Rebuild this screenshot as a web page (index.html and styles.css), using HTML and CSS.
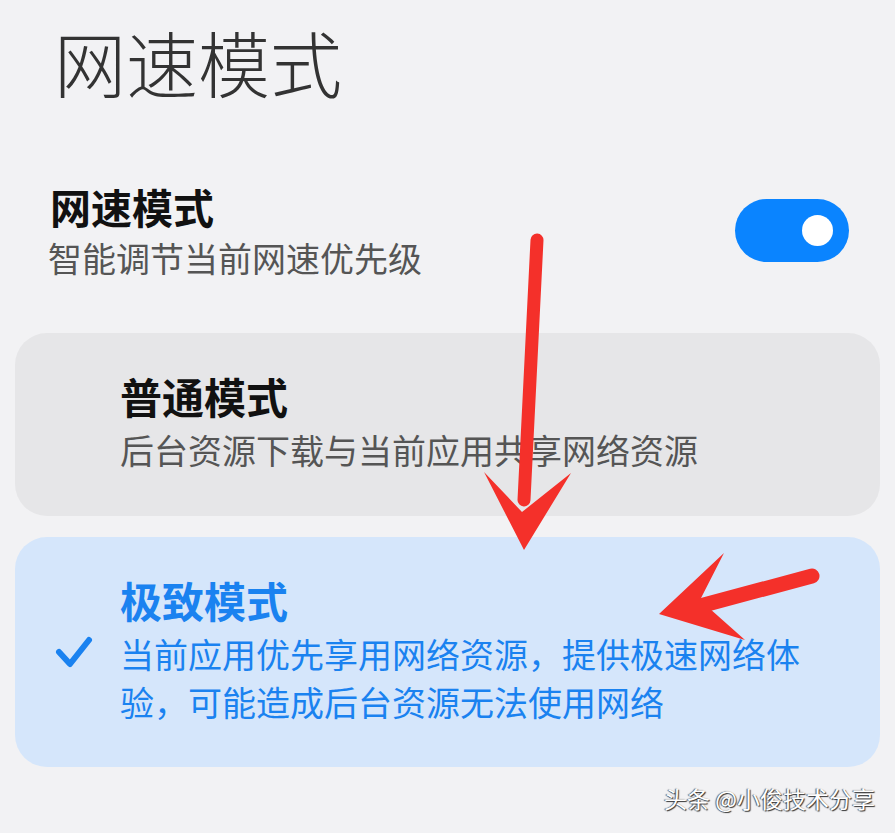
FILE: index.html
```html
<!DOCTYPE html>
<html lang="zh-CN">
<head>
    <meta charset="UTF-8">
    <meta name="viewport" content="width=device-width, initial-scale=1.0">
    <title>网速模式</title>
    <link rel="stylesheet" href="styles.css">
</head>
<body>
    <div class="page">
        <h1 class="page-title">网速模式</h1>

        <div class="setting-row">
            <div class="setting-text">
                <div class="setting-name">网速模式</div>
                <div class="setting-desc">智能调节当前网速优先级</div>
            </div>
            <div class="switch on"><span class="knob"></span></div>
        </div>

        <div class="mode-list">
            <div class="mode-card">
                <div class="mode-check"></div>
                <div class="mode-name">普通模式</div>
                <div class="mode-check"></div>
                <div class="mode-desc">后台资源下载与当前应用共享网络资源</div>
            </div>
            <div class="mode-card selected">
                <div class="mode-check"></div>
                <div class="mode-name">极致模式</div>
                <div class="mode-check">
                    <svg width="38" height="32" viewBox="0 0 38 32">
                        <path d="M4 16 L15 28 L34 4" fill="none" stroke="#1a82f0" stroke-width="6" stroke-linecap="round" stroke-linejoin="round"/>
                    </svg>
                </div>
                <div class="mode-desc">当前应用优先享用网络资源，提供极速网络体验，可能造成后台资源无法使用网络</div>
            </div>
        </div>

        <div class="watermark">头条 @小俊技术分享</div>

        <!-- red arrows drawn over the screenshot -->
        <svg class="arrows" width="895" height="833" viewBox="0 0 895 833">
            <path d="M537 240 L524 500" stroke="#f4302a" stroke-width="13" stroke-linecap="round"/>
            <polygon points="484,472 522,512 571,473 524,550" fill="#f4302a"/>
            <path d="M812 576 L700 606" stroke="#f4302a" stroke-width="15" stroke-linecap="round"/>
            <polygon points="724,553 700,600 745,640 659,614" fill="#f4302a"/>
        </svg>
    </div>
</body>
</html>
```

FILE: styles.css
```css
body {
    margin: 0;
    padding: 0;
    background: #f2f2f4;
    font-family: "Noto Sans CJK SC", "Noto Sans", sans-serif;
}
.page {
    position: relative;
    width: 895px;
    height: 833px;
    overflow: hidden;
}
.page-title {
    margin: 0;
    padding: 16px 0 0 54px;
    font-size: 72px;
    font-weight: 300;
    line-height: 90px;
    color: #333;
}
.setting-row {
    display: flex;
    justify-content: space-between;
    align-items: flex-start;
    margin-top: 75px;
    padding: 0 46px 0 48px;
}
.setting-name {
    font-size: 41px;
    font-weight: bold;
    line-height: 50px;
    color: #111;
    padding-left: 2px;
}
.setting-desc {
    font-size: 34px;
    line-height: 44px;
    color: #555;
    margin-top: 5px;
}
.switch {
    width: 114px;
    height: 63px;
    border-radius: 32px;
    background: #ccc;
    display: flex;
    align-items: center;
    justify-content: flex-start;
    padding: 0 16px;
    box-sizing: border-box;
    margin-top: 18px;
}
.switch.on {
    background: #0a84ff;
    justify-content: flex-end;
}
.knob {
    width: 31px;
    height: 31px;
    border-radius: 50%;
    background: #fff;
}
.mode-list {
    display: flex;
    flex-direction: column;
    gap: 21px;
    margin-top: 53px;
    padding: 0 15px;
}
.mode-card {
    display: grid;
    grid-template-columns: 105px 1fr;
    background: #e6e6e8;
    border-radius: 32px;
    padding: 38px 60px 42px 0;
}
.mode-card.selected {
    background: #d5e6fb;
    padding-bottom: 41px;
}
.mode-check {
    display: flex;
    justify-content: center;
    padding: 11px 0 0 12px;
}
.mode-name {
    font-size: 42px;
    font-weight: bold;
    line-height: 50px;
    color: #111;
}
.mode-desc {
    font-size: 34px;
    line-height: 48px;
    color: #555;
    margin-top: 5px;
}
.selected .mode-name {
    color: #1a82f0;
}
.selected .mode-desc {
    color: #1a82f0;
}
.watermark {
    position: absolute;
    right: 20px;
    bottom: 18px;
    font-size: 23px;
    color: #fff;
    text-shadow: 1px 1px 1px #333, -1px 0 1px #555;
}
.arrows {
    position: absolute;
    left: 0;
    top: 0;
    pointer-events: none;
}
```
